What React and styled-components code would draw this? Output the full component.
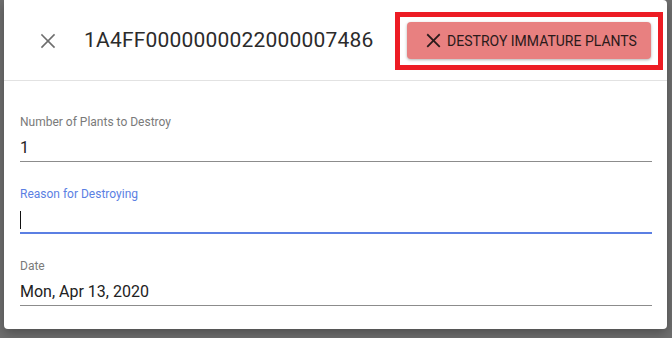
import styled, { createGlobalStyle } from 'styled-components';

const GlobalStyle = createGlobalStyle`
  html, body {
    margin: 0;
    padding: 0;
    background: #6f6f6f;
    font-family: Roboto, "Liberation Sans", sans-serif;
  }
`;

const Backdrop = styled.div`
  width: 672px;
  height: 338px;
  padding-left: 4px;
  box-sizing: border-box;
`;

const Dialog = styled.div`
  width: 663px;
  height: 329px;
  background: #fff;
  border-radius: 0 4px 4px 4px;
  box-shadow: 0 4px 12px rgba(0, 0, 0, 0.3);
  display: flex;
  flex-direction: column;
`;

const Header = styled.div`
  height: 81px;
  box-sizing: border-box;
  border-bottom: 1px solid #e2e2e2;
  display: flex;
  align-items: center;
  padding: 0 0 0 32px;
`;

const CloseButton = styled.button`
  width: 24px;
  height: 24px;
  padding: 0;
  border: none;
  background: none;
  display: flex;
  align-items: center;
  justify-content: center;
  color: #6d6d6d;
  margin-top: 1px;
`;

const Title = styled.h2`
  margin: 0 0 0 24px;
  font-size: 21px;
  font-weight: 400;
  color: #2b2b2b;
  flex: 1;
  letter-spacing: 0.2px;
`;

const Highlight = styled.div`
  border: 5px solid #ed1c24;
  padding: 5px 7px 6px;
  margin-right: 4px;
  margin-top: 2px;
  background: #fff;
`;

const DangerButton = styled.button`
  width: 244px;
  height: 37px;
  border: none;
  border-radius: 4px;
  background: #e88080;
  box-shadow: 0 1px 3px rgba(0, 0, 0, 0.3);
  color: #2a1a1a;
  font-family: Roboto, "Liberation Sans", sans-serif;
  font-size: 14px;
  font-weight: 400;
  text-transform: uppercase;
  display: flex;
  align-items: center;
  justify-content: center;
  gap: 6px;
  padding: 0 0 0 5px;
`;

const Form = styled.div`
  padding: 9px 15px 0 16px;
`;

const Field = styled.div`
  padding-top: 26px;
`;

const Label = styled.label`
  display: block;
  font-size: 12px;
  line-height: 12px;
  color: ${(p) => (p.$focused ? '#5b7fe3' : '#7a7a7a')};
`;

const InputBox = styled.div`
  height: 34px;
  box-sizing: border-box;
  padding-top: 6px;
  font-size: 16px;
  line-height: 26px;
  color: #222;
  border-bottom: ${(p) => (p.$focused ? '2px solid #5b7fe3' : '1px solid #8c8c8c')};
  display: flex;
  align-items: center;
`;

const Caret = styled.span`
  width: 1px;
  height: 18px;
  background: #111;
  margin-top: 2px;
`;

const XIcon = ({ size, stroke }) => (
  <svg width={size} height={size} viewBox="0 0 16 16" fill="none" stroke="currentColor" strokeWidth={stroke} strokeLinecap="square">
    <line x1="2" y1="2" x2="14" y2="14" />
    <line x1="14" y1="2" x2="2" y2="14" />
  </svg>
);

export default function App() {
  return (
    <>
      <GlobalStyle />
      <Backdrop>
        <Dialog>
          <Header>
            <CloseButton>
              <XIcon size={16} stroke={1.6} />
            </CloseButton>
            <Title>1A4FF0000000022000007486</Title>
            <Highlight>
              <DangerButton>
                <XIcon size={15} stroke={1.9} />
                Destroy Immature Plants
              </DangerButton>
            </Highlight>
          </Header>
          <Form>
            <Field>
              <Label>Number of Plants to Destroy</Label>
              <InputBox>1</InputBox>
            </Field>
            <Field>
              <Label $focused>Reason for Destroying</Label>
              <InputBox $focused>
                <Caret />
              </InputBox>
            </Field>
            <Field>
              <Label>Date</Label>
              <InputBox>Mon, Apr 13, 2020</InputBox>
            </Field>
          </Form>
        </Dialog>
      </Backdrop>
    </>
  );
}
